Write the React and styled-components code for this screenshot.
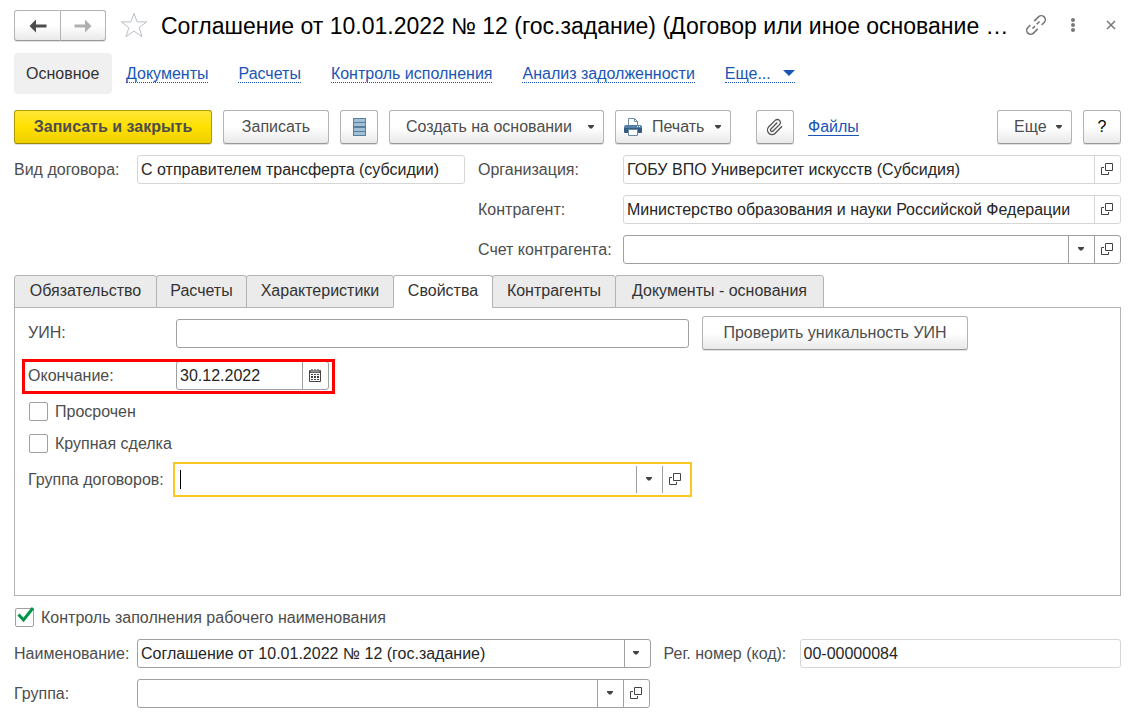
import React, { useState } from "react";
import styled, { createGlobalStyle } from "styled-components";

const GlobalStyle = createGlobalStyle`
    * {
        box-sizing: border-box;
    }
    body {
        margin: 0;
        background: #fff;
        color: #4d4d4d;
    }
    body, button, input {
        font-family: "Liberation Sans", Arial, sans-serif;
        font-size: 16px;
        line-height: 20px;
    }
`;

const Page = styled.main`
    padding: 10px 20px 12px 14px;
`;

const Header = styled.header`
    display: flex;
    align-items: center;
    height: 31px;
    margin-right: -4px;
`;

const Title = styled.h1`
    flex: 1;
    min-width: 0;
    margin: 0 0 0 13px;
    overflow: hidden;
    text-overflow: ellipsis;
    white-space: nowrap;
    color: #000;
    font-size: 23px;
    font-weight: 400;
    line-height: 30px;
`;

const Button = styled.button`
    display: inline-flex;
    align-items: center;
    justify-content: ${props => (props.$menu ? "space-between" : "center")};
    flex: none;
    height: 34px;
    min-width: ${props => props.$width};
    padding: ${props => (props.$menu ? "0 9px 0 16px" : "0")};
    border: 1px solid ${props => (props.$primary ? "#b09a00" : "#b3b3b3")};
    border-bottom-color: ${props => (props.$primary ? "#9c8900" : "#999")};
    border-radius: 3px;
    background: ${props => (props.$primary
        ? "linear-gradient(#ffe838, #ffe000 50%, #edcf00)"
        : "linear-gradient(#fff 50%, #e9e9e9)")};
    box-shadow: 0 1px 0 rgba(0, 0, 0, .12);
    color: ${props => (props.$dark ? "#000" : "#4d4d4d")};
    font-weight: ${props => (props.$primary ? "700" : "400")};
    white-space: nowrap;
`;

const PrintButton = styled(Button)`
    padding-left: 8px;

    svg:first-child {
        margin-right: 10px;
    }
    svg:last-child {
        margin-left: auto;
    }
`;

const History = styled.div`
    display: flex;
    flex: none;

    ${Button} {
        height: 31px;
    }
    ${Button}:first-child {
        border-radius: 3px 0 0 3px;
    }
    ${Button}:last-child {
        border-left: 0;
        border-radius: 0 3px 3px 0;
    }
`;

const IconButton = styled.button`
    display: flex;
    flex: none;
    align-items: center;
    justify-content: center;
    width: 28px;
    height: 28px;
    margin-left: ${props => props.$gap || "0"};
    padding: 0 0 2px;
    border: 0;
    background: none;
`;

const Sections = styled.nav`
    display: flex;
    align-items: center;
    gap: 30px;
    margin-top: 12px;
    white-space: nowrap;
`;

const CurrentSection = styled.span`
    min-width: 98px;
    margin-right: -16px;
    padding: 11px 12px 10px;
    border-radius: 4px;
    background: #f0f0f0;
    color: #333;
`;

const SectionLink = styled.a`
    border-bottom: 1px dotted #1a55b5;
    color: #1a55b5;
    line-height: 17px;
    text-decoration: none;

    svg {
        margin-left: 12px;
    }
`;

const Toolbar = styled.div`
    display: flex;
    align-items: center;
    gap: 11px;
    margin-top: 16px;
`;

const Spacer = styled.div`
    flex: ${props => (props.$width ? "none" : "1")};
    width: ${props => props.$width || "auto"};
`;

const FilesLink = styled.a`
    margin-left: 3px;
    border-bottom: 1px solid #1a55b5;
    color: #1a55b5;
    line-height: 16px;
    text-decoration: none;
`;

const HeadGrid = styled.div`
    display: grid;
    grid-template-columns: 123px minmax(0, 328fr) 158px minmax(0, 498fr);
    row-gap: 11px;
    align-items: center;
    margin-top: 11px;
`;

const Label = styled.label`
    width: ${props => props.$width || "auto"};
    flex: none;
    padding-left: ${props => props.$indent || "0"};
    grid-column: ${props => props.$column || "auto"};
    white-space: nowrap;
`;

const Box = styled.div`
    --line: ${props => (props.$muted ? "#d6d6d6" : "#a0a0a0")};
    display: flex;
    flex: ${props => props.$flex || "1"};
    min-width: 0;
    height: 29px;
    border: 1px solid ${props => (props.$focused ? "transparent" : "var(--line)")};
    border-radius: ${props => (props.$focused ? "0" : "3px")};
    outline: ${props => (props.$focused ? "2px solid #f9c922" : "none")};
    outline-offset: 1px;
    background: #fff;
`;

const Caret = styled.span`
    flex: none;
    align-self: center;
    width: 1px;
    height: 19px;
    margin-left: 3px;
    background: #000;
`;

const TextInput = styled.input`
    flex: 1;
    min-width: 0;
    padding: 0 3px;
    border: 0;
    outline: 0;
    background: transparent;
    color: #262626;
`;

const BoxButton = styled.button`
    display: flex;
    flex: none;
    align-items: center;
    justify-content: center;
    width: 26px;
    padding: 0 2px 1px 0;
    border: 0;
    border-left: 1px solid var(--line);
    background: none;
`;

const Tabs = styled.div`
    display: flex;
    margin-top: 11px;
`;

const Tab = styled.button`
    height: 33px;
    min-width: ${props => props.$width};
    margin: 0 -1px -1px 0;
    padding: 0 0 2px;
    border: 1px solid #b3b3b3;
    border-bottom-color: ${props => (props.$active ? "#fff" : "#b3b3b3")};
    border-radius: 3px 3px 0 0;
    background: ${props => (props.$active ? "#fff" : "#ebebeb")};
    color: #333;
    white-space: nowrap;
    z-index: 1;
`;

const Panel = styled.section`
    display: flex;
    flex-direction: column;
    gap: 11px;
    min-height: 289px;
    padding: 8px 13px;
    border: 1px solid #b3b3b3;
`;

const Row = styled.div`
    position: relative;
    display: flex;
    align-items: center;
    margin-top: ${props => props.$top || "0"};
`;

// red frame drawn over the row that needs attention
const Highlight = styled.div`
    position: absolute;
    top: -2px;
    left: -6px;
    width: 313px;
    height: 35px;
    border: 3px solid #f00;
    pointer-events: none;
`;

const CheckLabel = styled.label`
    position: relative;
    display: flex;
    align-items: center;
    gap: 7px;
    height: 21px;
    padding-left: 1px;
    margin-top: ${props => props.$top || "0"};

    svg {
        position: absolute;
        left: 3px;
        top: -1px;
        pointer-events: none;
    }
`;

const CheckInput = styled.input`
    appearance: none;
    width: 19px;
    height: 19px;
    margin: 0;
    border: 1px solid #a0a0a0;
    border-radius: 2px;
    background: #fff;
`;

function Arrow({ color, flip }) {
    return (
        <svg width="18" height="14" viewBox="0 0 18 14">
            <path
                d="M0.5 7 L7 0.5 V5.5 H17.5 V8.5 H7 V13.5 Z"
                fill={color}
                transform={flip ? "rotate(180 9 7)" : undefined}
            />
        </svg>
    );
}

function Down() {
    return (
        <svg width="6" height="4" viewBox="0 0 6 4">
            <path d="M0 0h6v1L4 3.5H2L0 1z" fill="#444" />
        </svg>
    );
}

function OpenIcon() {
    return (
        <svg width="12" height="12" viewBox="0 0 12 12" fill="none" stroke="#444">
            <path d="M4.5 0.5h7v7h-7zM3 4.5H0.5v7h7V9" />
        </svg>
    );
}

function CalendarIcon() {
    return (
        <svg width="12" height="13" viewBox="0 0 12 13">
            <path d="M0 2q0-1 1-1h10q1 0 1 1v10q0 1-1 1H1q-1 0-1-1z" fill="#444" />
            <path d="M2 0h2v3H2zM5 0h2v3H5zM8 0h2v3H8z" fill="#444" stroke="#fff" strokeWidth="0.5" />
            <path d="M1 4h10v8H1z" fill="#fff" />
            <path d="M2 5h2v1H2zM5 5h2v1H5zM8 5h2v1H8zM2 7h2v2H2zM5 7h2v2H5zM8 7h2v2H8zM2 10h2v1H2zM5 10h2v1H5zM8 10h2v1H8z" fill="#444" />
        </svg>
    );
}

function Field({ id, value = "", muted, focused, flex, buttons = [] }) {
    const [text, setText] = useState(value);

    return (
        <Box $muted={muted} $focused={focused} $flex={flex}>
            {focused && <Caret />}
            <TextInput id={id} value={text} readOnly={muted} onChange={(e) => setText(e.target.value)} />
            {buttons.includes("list") && <BoxButton type="button" aria-label="Выбрать"><Down /></BoxButton>}
            {buttons.includes("date") && <BoxButton type="button" aria-label="Календарь"><CalendarIcon /></BoxButton>}
            {buttons.includes("open") && <BoxButton type="button" aria-label="Открыть"><OpenIcon /></BoxButton>}
        </Box>
    );
}

function Check({ label, top, initial = false }) {
    const [checked, setChecked] = useState(initial);

    return (
        <CheckLabel $top={top}>
            <CheckInput type="checkbox" checked={checked} onChange={(e) => setChecked(e.target.checked)} />
            {checked && (
                <svg width="18" height="17" viewBox="0 0 18 17">
                    <path d="M1.5 8.5 L6.5 14 L16 2" fill="none" stroke="#009646" strokeWidth="3" />
                </svg>
            )}
            {label}
        </CheckLabel>
    );
}

const sections = ["Документы", "Расчеты", "Контроль исполнения", "Анализ задолженности"];
const tabs = [
    { name: "Обязательство", width: "143px" },
    { name: "Расчеты", width: "91px" },
    { name: "Характеристики", width: "148px" },
    { name: "Свойства", width: "100px" },
    { name: "Контрагенты", width: "124px" },
    { name: "Документы - основания", width: "209px" },
];

export default function App() {
    const [activeTab, setActiveTab] = useState("Свойства");

    return (
        <Page>
            <GlobalStyle />
            <Header>
                <History>
                    <Button type="button" $width="47px" aria-label="Назад"><Arrow color="#4d4d4d" /></Button>
                    <Button type="button" $width="45px" aria-label="Вперед"><Arrow color="#b0b0b0" flip /></Button>
                </History>
                <IconButton type="button" $gap="14px" aria-label="В избранное">
                    <svg width="30" height="28" viewBox="0 0 30 28" fill="none" stroke="#b3b9c1">
                        <path d="M15 1.5 L18.4 10.7 H28.5 L20.5 16.8 L23.6 26.5 L15 20.6 L6.4 26.5 L9.5 16.8 L1.5 10.7 H11.6 Z" />
                    </svg>
                </IconButton>
                <Title>Соглашение от 10.01.2022 № 12 (гос.задание) (Договор или иное основание …</Title>
                <IconButton type="button" $gap="12px" aria-label="Получить ссылку">
                    <svg width="24" height="24" viewBox="0 0 24 24" fill="none" stroke="#777" strokeWidth="1.6">
                        <g transform="rotate(-45 12 12)">
                            <path d="M10.500 16H4.500a4 4 0 0 1 0-8h3.500M13.500 8h6a4 4 0 0 1 0 8h-3.500M7 12h3.500M13 12h4" />
                        </g>
                    </svg>
                </IconButton>
                <IconButton type="button" $gap="9px" aria-label="Меню">
                    <svg width="4" height="14" viewBox="0 0 4 14" fill="#777">
                        <circle cx="2" cy="2" r="2" />
                        <circle cx="2" cy="7" r="2" />
                        <circle cx="2" cy="12" r="2" />
                    </svg>
                </IconButton>
                <IconButton type="button" $gap="10px" aria-label="Закрыть">
                    <svg width="10" height="10" viewBox="0 0 10 10" stroke="#777" strokeWidth="1.5">
                        <path d="M1 1l8 8M9 1L1 9" />
                    </svg>
                </IconButton>
            </Header>

            <Sections>
                <CurrentSection>Основное</CurrentSection>
                {sections.map(name => <SectionLink key={name} href="#">{name}</SectionLink>)}
                <SectionLink href="#">
                    Еще...
                    <svg width="12" height="12" viewBox="0 0 12 12"><path d="M0 3h12L6 9z" fill="#1a55b5" /></svg>
                </SectionLink>
            </Sections>

            <Toolbar>
                <Button type="button" $width="198px" $primary>Записать и закрыть</Button>
                <Button type="button" $width="106px">Записать</Button>
                <Button type="button" $width="38px" aria-label="Реестр">
                    <svg width="13" height="18" viewBox="0 0 13 18">
                        <path d="M0 0h13v18H0z" fill="#55809f" />
                        <path d="M1 1h11v3H1zM1 5h11v3H1zM1 10h11v3H1zM1 14h11v3H1z" fill="#a3bfd4" />
                    </svg>
                </Button>
                <Button type="button" $width="215px" $menu>Создать на основании<Down /></Button>
                <PrintButton type="button" $width="116px" $menu>
                    <svg width="18" height="18" viewBox="0 0 18 18">
                        <path d="M4.500 7V0.500h6l3 3V7" fill="#fff" stroke="#6f8ba3" />
                        <path d="M10.500 0.500v3h3" fill="none" stroke="#6f8ba3" />
                        <path d="M0 9q0-2 2-2h14q2 0 2 2v5H0z" fill="#5580a8" />
                        <path d="M0 10h18v4q0 1-1 1H1q-1 0-1-1z" fill="#355c80" />
                        <path d="M13 8h1v1h-1zM15 8h1v1h-1z" fill="#fff" />
                        <path d="M4.500 11.500h9v6h-9z" fill="#fff" stroke="#6f8ba3" />
                    </svg>
                    Печать
                    <Down />
                </PrintButton>
                <Spacer $width="3px" />
                <Button type="button" $width="38px" aria-label="Вложения">
                    <svg width="18" height="18" viewBox="0 0 24 24" fill="none" stroke="#555" strokeWidth="1.800">
                        <path d="m21.440 11.050-9.190 9.190a6 6 0 0 1-8.490-8.490l8.570-8.570A4 4 0 1 1 18 8.840l-8.590 8.570a2 2 0 0 1-2.830-2.830l8.490-8.480" />
                    </svg>
                </Button>
                <FilesLink href="#">Файлы</FilesLink>
                <Spacer />
                <Button type="button" $width="75px" $menu>Еще<Down /></Button>
                <Button type="button" $width="38px" $dark>?</Button>
            </Toolbar>

            <HeadGrid>
                <Label htmlFor="kind">Вид договора:</Label>
                <Field id="kind" value="С отправителем трансферта (субсидии)" muted />
                <Label htmlFor="org" $indent="13px">Организация:</Label>
                <Field id="org" value="ГОБУ ВПО Университет искусств (Субсидия)" muted buttons={["open"]} />
                <Label htmlFor="partner" $indent="13px" $column="3">Контрагент:</Label>
                <Field id="partner" value="Министерство образования и науки Российской Федерации" muted buttons={["open"]} />
                <Label htmlFor="account" $indent="13px" $column="3">Счет контрагента:</Label>
                <Field id="account" buttons={["list", "open"]} />
            </HeadGrid>

            <Tabs role="tablist">
                {tabs.map(({ name, width }) => (
                    <Tab
                        key={name}
                        type="button"
                        role="tab"
                        aria-selected={name === activeTab}
                        $active={name === activeTab}
                        $width={width}
                        onClick={() => setActiveTab(name)}
                    >
                        {name}
                    </Tab>
                ))}
            </Tabs>
            <Panel>
                <Row>
                    <Label htmlFor="uin" $width="148px">УИН:</Label>
                    <Field id="uin" flex="0 1 513px" />
                    <Spacer $width="13px" />
                    <Button type="button" $width="266px">Проверить уникальность УИН</Button>
                </Row>
                <Row>
                    <Label htmlFor="end" $width="148px">Окончание:</Label>
                    <Field id="end" value="30.12.2022" flex="0 1 153px" buttons={["date"]} />
                    <Highlight />
                </Row>
                <Check label="Просрочен" />
                <Check label="Крупная сделка" />
                <Row>
                    <Label htmlFor="contracts" $width="148px">Группа договоров:</Label>
                    <Field id="contracts" flex="0 1 513px" focused buttons={["list", "open"]} />
                </Row>
            </Panel>

            <Check label="Контроль заполнения рабочего наименования" top="11px" initial />
            <Row $top="11px">
                <Label htmlFor="name" $width="123px">Наименование:</Label>
                <Field id="name" value="Соглашение от 10.01.2022 № 12 (гос.задание)" flex="514" buttons={["list"]} />
                <Label htmlFor="code" $width="149px" $indent="13px">Рег. номер (код):</Label>
                <Field id="code" value="00-00000084" flex="321" muted />
            </Row>
            <Row $top="11px">
                <Label htmlFor="group" $width="123px">Группа:</Label>
                <Field id="group" flex="0 1 513px" buttons={["list", "open"]} />
            </Row>
        </Page>
    );
}
